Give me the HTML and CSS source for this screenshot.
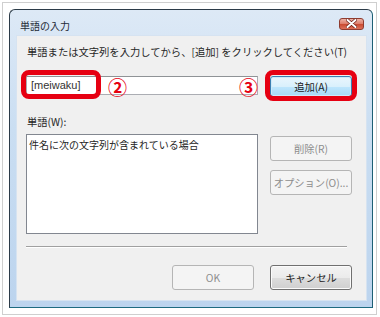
FILE: index.html
```html
<!DOCTYPE html>
<html lang="ja">

<head>
    <meta charset="UTF-8">
    <meta name="viewport" content="width=device-width, initial-scale=1.0">
    <title>単語の入力</title>

    <link rel="stylesheet" href="styles.css">
</head>

<body>
    <div class="shot">
        <div class="window">
            <div class="titlebar">
                <span class="title">単語の入力</span>
                <span class="close-btn">
                    <svg width="11" height="9" viewBox="0 0 11 9">
                        <path d="M1.5 1 L9.5 8 M9.5 1 L1.5 8" stroke="#6b1a10" stroke-width="3.4" stroke-linecap="round" />
                        <path d="M1.5 1 L9.5 8 M9.5 1 L1.5 8" stroke="#fff" stroke-width="2" stroke-linecap="round" />
                    </svg>
                </span>
            </div>

            <div class="client">
                <p class="prompt">単語または文字列を入力してから、[追加] をクリックしてください(T)</p>

                <div class="entry-row">
                    <div class="textbox">[meiwaku]</div>
                    <button class="btn btn-default" type="button">追加(A)</button>

                    <!-- red annotations drawn over the dialog -->
                    <span class="mark mark-input"></span>
                    <span class="mark mark-add"></span>
                    <span class="num num-2">②</span>
                    <span class="num num-3">③</span>
                </div>

                <p class="list-label">単語(W):</p>

                <div class="list-row">
                    <div class="listbox">件名に次の文字列が含まれている場合</div>
                    <div class="side-btns">
                        <button class="btn" type="button" disabled>削除(R)</button>
                        <button class="btn" type="button" disabled>オプション(O)...</button>
                    </div>
                </div>

                <div class="separator"></div>

                <div class="footer">
                    <button class="btn" type="button" disabled>OK</button>
                    <button class="btn" type="button">キャンセル</button>
                </div>
            </div>
        </div>
    </div>
</body>

</html>
```

FILE: styles.css
```css
* {
    padding: 0;
    margin: 0;
    box-sizing: border-box;
}

body {
    font-family: "Noto Sans CJK JP", "Noto Sans", sans-serif;
    font-size: 10.3px;
    color: #262626;
    background: #fff;
    width: 380px;
    height: 317px;
    overflow: hidden;
}

.shot {
    margin: 2px 0 0 2px;
    width: 375px;
    height: 313px;
    border: 1px solid #cfcfcf;
    padding: 6px 0 0 6px;
}

.window {
    width: 364px;
    height: 299px;
    border: 1px solid #2c3b48;
    border-bottom-color: #1d6a80;
    border-right-color: #1d5f74;
    border-radius: 6px 6px 0 0;
    background: linear-gradient(#dde9f6, #cadef2 40%, #bcd4ee);
    padding: 0 5px 6px 6px;
    display: flex;
    flex-direction: column;
}

.titlebar {
    height: 25px;
    display: flex;
    align-items: center;
    justify-content: space-between;
    padding: 0 3px 0 4px;
}

.title {
    font-size: 10px;
    color: #1e2a36;
    margin-top: 6px;
}

.close-btn {
    width: 25px;
    height: 12px;
    margin-top: 2px;
    border: 1px solid #8e3b2f;
    border-radius: 3px;
    background: linear-gradient(#eeb3a6, #dd7a66 50%, #c9492f 51%, #dc7059);
    display: flex;
    align-items: center;
    justify-content: center;
}

.client {
    flex: 1;
    background: #f0f0f0;
    border: 1px solid #d6e3f1;
    padding: 8px 14px 0 9px;
}

.prompt {
    line-height: 16px;
    white-space: nowrap;
    padding-left: 1px;
}

.entry-row {
    position: relative;
    margin-top: 16px;
    display: flex;
    align-items: flex-start;
    gap: 12px;
}

.textbox {
    width: 233px;
    height: 19px;
    background: #fff;
    border: 1px solid #abadb3;
    border-top-color: #8f9396;
    padding-left: 4px;
    line-height: 17px;
    font-family: "Liberation Sans", sans-serif;
    font-size: 11px;
    color: #333;
}

.btn {
    width: 82px;
    height: 21px;
    font-family: inherit;
    font-size: 10.3px;
    color: #1a1a1a;
    border: 1px solid #707070;
    border-radius: 3px;
    background: linear-gradient(#f3f3f3, #ebebeb 50%, #dddddd 51%, #cfcfcf);
    box-shadow: inset 0 0 0 1px #fbfbfb;
}

.btn:disabled {
    color: #8d8d8d;
    border-color: #b5b5b5;
    background: #f4f4f4;
    box-shadow: none;
}

.btn-default {
    border-color: #3c7fb1;
    background: linear-gradient(#eaf6fd, #d9f0fc 50%, #bee6fd 51%, #a7d9f5);
    box-shadow: inset 0 0 0 1px #cdeafa;
}

.mark {
    position: absolute;
    border: 5px solid #e60012;
    border-radius: 8px;
}

.mark-input {
    left: -5px;
    top: -6px;
    width: 80px;
    height: 29px;
}

.mark-add {
    left: 239px;
    top: -6px;
    width: 92px;
    height: 31px;
}

.num {
    position: absolute;
    color: #e60012;
    font-size: 19px;
    font-weight: 700;
    line-height: 19px;
}

.num-2 {
    left: 82px;
    top: 1px;
}

.num-3 {
    left: 213px;
    top: 1px;
}

.list-label {
    margin-top: 17px;
    line-height: 16px;
    padding-left: 1px;
}

.list-row {
    margin-top: 4px;
    display: flex;
    align-items: flex-start;
    gap: 12px;
}

.listbox {
    width: 233px;
    height: 100px;
    background: #fff;
    border: 1px solid #828790;
    padding: 2px 2px;
    line-height: 15px;
    font-size: 10px;
}

.side-btns {
    margin-top: 2px;
    display: flex;
    flex-direction: column;
    gap: 9px;
}

.side-btns .btn {
    height: 25px;
}

.separator {
    margin: 12px 5px 0 0;
    border-top: 1px solid #a0a0a0;
    border-bottom: 1px solid #fff;
}

.footer {
    margin-top: 17px;
    display: flex;
    justify-content: flex-end;
    gap: 16px;
}

.footer .btn {
    height: 25px;
}
```
